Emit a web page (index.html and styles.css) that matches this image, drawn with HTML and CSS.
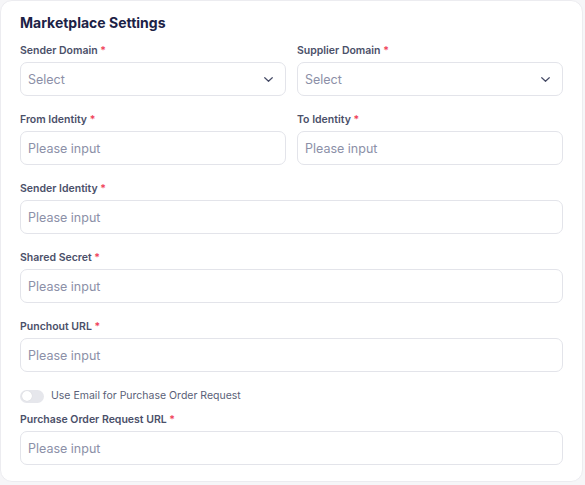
FILE: index.html
```html
<!DOCTYPE html>
<html lang="en">
<head>
<meta charset="utf-8">
<title>Marketplace Settings</title>
<link rel="stylesheet" href="styles.css">
</head>
<body>
<section class="card">
  <h2 class="card-title">Marketplace Settings</h2>

  <div class="grid-2">
    <div class="field">
      <label class="label">Sender Domain <span class="req">*</span></label>
      <div class="control select">
        <span class="placeholder">Select</span>
        <svg class="chevron" viewBox="0 0 9 5" width="9" height="5"><path d="M0.75 0.75 4.5 4.25 8.25 0.75" fill="none" stroke="#464b66" stroke-width="1.2" stroke-linecap="round" stroke-linejoin="round"/></svg>
      </div>
    </div>
    <div class="field">
      <label class="label">Supplier Domain <span class="req">*</span></label>
      <div class="control select">
        <span class="placeholder">Select</span>
        <svg class="chevron" viewBox="0 0 9 5" width="9" height="5"><path d="M0.75 0.75 4.5 4.25 8.25 0.75" fill="none" stroke="#464b66" stroke-width="1.2" stroke-linecap="round" stroke-linejoin="round"/></svg>
      </div>
    </div>
    <div class="field">
      <label class="label">From Identity <span class="req">*</span></label>
      <input class="control" type="text" placeholder="Please input">
    </div>
    <div class="field">
      <label class="label">To Identity <span class="req">*</span></label>
      <input class="control" type="text" placeholder="Please input">
    </div>
  </div>

  <div class="field">
    <label class="label">Sender Identity <span class="req">*</span></label>
    <input class="control" type="text" placeholder="Please input">
  </div>
  <div class="field">
    <label class="label">Shared Secret <span class="req">*</span></label>
    <input class="control" type="text" placeholder="Please input">
  </div>
  <div class="field">
    <label class="label">Punchout URL <span class="req">*</span></label>
    <input class="control" type="text" placeholder="Please input">
  </div>

  <div class="switch-row">
    <span class="switch"><span class="knob"></span></span>
    <span class="switch-text">Use Email for Purchase Order Request</span>
  </div>

  <div class="field field-last">
    <label class="label">Purchase Order Request URL <span class="req">*</span></label>
    <input class="control" type="text" placeholder="Please input">
  </div>
</section>
</body>
</html>
```

FILE: styles.css
```css
* { box-sizing: border-box; }

html, body {
  margin: 0;
  background: #f6f6f8;
  font-family: Inter, "Noto Sans", sans-serif;
}

.card {
  width: 583px;
  height: 482px;
  background: #ffffff;
  border: 1px solid #ececf0;
  border-radius: 12px;
  padding: 13px 19px 0 19px;
}

.card-title {
  margin: 0 0 13px 0;
  font-size: 14px;
  line-height: 18px;
  font-weight: 700;
  color: #1c2246;
}

.grid-2 {
  display: grid;
  grid-template-columns: 1fr 1fr;
  column-gap: 11px;
}

.field {
  display: flex;
  flex-direction: column;
  gap: 5px;
  margin-bottom: 18px;
}

.label {
  font-size: 10.5px;
  line-height: 12px;
  font-weight: 600;
  color: #4b5069;
}

.req { color: #f0435a; }

.control {
  height: 34px;
  width: 100%;
  border: 1px solid #e3e4ea;
  border-radius: 7px;
  background: #ffffff;
  padding: 0 7px;
  font-family: inherit;
  font-size: 12.5px;
  color: #3a3f58;
  outline: none;
}

.control::placeholder { color: #8c90a8; }

.select {
  display: flex;
  align-items: center;
  justify-content: space-between;
  padding: 0 12px 0 7px;
}

.placeholder {
  font-size: 12.5px;
  color: #8c90a8;
}

.switch-row {
  display: flex;
  align-items: center;
  gap: 7px;
  margin-top: -1px;
  margin-bottom: 11px;
}

.switch {
  width: 24px;
  height: 13px;
  border-radius: 7px;
  background: #e6e7ec;
  position: relative;
}

.knob {
  position: absolute;
  left: 1.5px;
  top: 1.5px;
  width: 10px;
  height: 10px;
  border-radius: 50%;
  background: #ffffff;
  box-shadow: 0 0 1px rgba(0,0,0,0.15);
}

.switch-text {
  font-size: 10.5px;
  line-height: 14px;
  color: #5a5f78;
}

.field-last { margin-bottom: 0; }
```
